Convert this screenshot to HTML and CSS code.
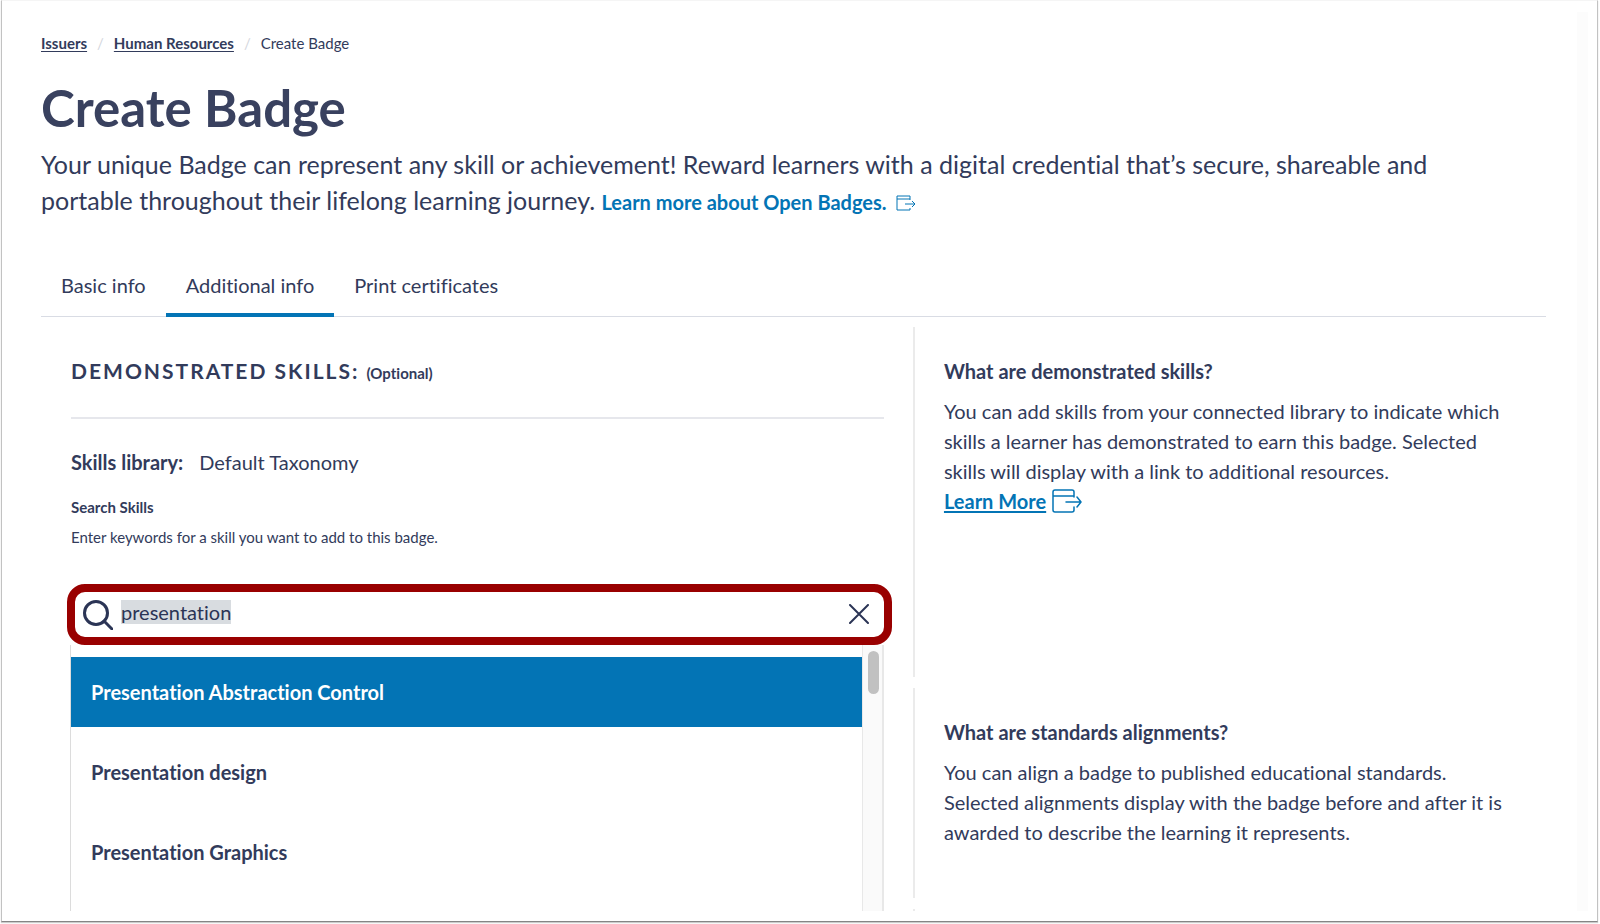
FILE: index.html
```html
<!DOCTYPE html>
<html lang="en">
<head>
<meta charset="utf-8">
<title>Create Badge</title>
<link rel="stylesheet" href="styles.css">
</head>
<body>
<svg class="sprite" aria-hidden="true">
  <symbol id="external" viewBox="0 0 30 24">
    <path d="M22 8V3a2 2 0 0 0-2-2H3a2 2 0 0 0-2 2v18a2 2 0 0 0 2 2h17a2 2 0 0 0 2-2v-3M1 7h21M14 13h15M25 8l4 5-4 5" fill="none" stroke="currentColor" stroke-width="1.5" stroke-linecap="round" stroke-linejoin="round"/>
  </symbol>
</svg>
<div class="frame">
  <div class="page">
    <header>
      <nav class="crumbs" aria-label="Breadcrumb">
        <a href="#">Issuers</a>
        <span class="sep">/</span>
        <a href="#">Human Resources</a>
        <span class="sep">/</span>
        <span>Create Badge</span>
      </nav>
      <h1 class="title">Create Badge</h1>
      <p class="lead">Your unique Badge can represent any skill or achievement! Reward learners with a digital credential that’s secure, shareable and portable throughout their lifelong learning journey. <a class="lead-link" href="#">Learn more about Open Badges. <svg class="icon-small" viewBox="0 0 20 16" aria-hidden="true"><path d="M14 5V1H1v14h13v-2M1 4h13M9 9h10M16 6l3 3-3 3" fill="none" stroke="currentColor" stroke-width="1"/></svg></a></p>
    </header>
    <nav class="tabs" aria-label="Badge sections">
      <a class="tab" href="#">Basic info</a>
      <a class="tab tab-active" href="#" aria-current="page">Additional info</a>
      <a class="tab" href="#">Print certificates</a>
    </nav>
    <div class="sections">
      <section class="skills">
        <h2 class="skills-title">DEMONSTRATED SKILLS: <small>(Optional)</small></h2>
        <p class="library"><strong>Skills library:</strong><span>Default Taxonomy</span></p>
        <label class="search-label" for="skill-search">Search Skills</label>
        <p class="search-help" id="skill-help">Enter keywords for a skill you want to add to this badge.</p>
        <div class="search">
          <svg class="search-icon" viewBox="0 0 30 30" aria-hidden="true"><circle cx="13" cy="13" r="11.5"/><path d="M21 21l8 8"/></svg>
          <input class="search-input" id="skill-search" type="text" value="presentation" aria-describedby="skill-help" autocomplete="off" spellcheck="false">
          <button class="clear" type="button" aria-label="Clear search"><svg viewBox="0 0 20 20" aria-hidden="true"><path d="M1 1l18 18M19 1L1 19"/></svg></button>
          <div class="menu">
            <ul class="options">
              <li><button class="option option-active" type="button">Presentation Abstraction Control</button></li>
              <li><button class="option" type="button">Presentation design</button></li>
              <li><button class="option" type="button">Presentation Graphics</button></li>
            </ul>
            <div class="track"><div class="thumb"></div></div>
          </div>
        </div>
      </section>
      <aside class="help">
        <h3>What are demonstrated skills?</h3>
        <p>You can add skills from your connected library to indicate which skills a learner has demonstrated to earn this badge. Selected skills will display with a link to additional resources.</p>
        <a class="more" href="#"><span>Learn More</span><svg class="icon-large" aria-hidden="true"><use href="#external"/></svg></a>
      </aside>
      <aside class="help">
        <h3>What are standards alignments?</h3>
        <p>You can align a badge to published educational standards. Selected alignments display with the badge before and after it is awarded to describe the learning it represents.</p>
      </aside>
      <aside class="help help-next"></aside>
    </div>
  </div>
  <div class="gutter"></div>
</div>
<script src="script.js"></script>
</body>
</html>
```
FILE: styles.css
```css
* { box-sizing: border-box; }

body {
  margin: 0;
  background: #fff;
  color: #323b5b;
  font: 400 20px/30px Lato, sans-serif;
  font-variant-ligatures: none;
}

h1, h2, h3, p, ul { margin: 0; padding: 0; }
a { color: inherit; }
button, input { font: inherit; color: inherit; }
.sprite { display: none; }

.frame {
  display: flex;
  height: calc(100vh - 2px);
  margin: 0 2px 2px 1px;
  padding: 11px 9px 10px;
  border: 1px solid #c2c2c2;
  border-top-color: #f5f5f5;
  border-bottom-color: #858585;
  box-shadow: 0 1px 1px #ccc;
  overflow: hidden;
}

.page {
  flex: 1;
  display: flex;
  flex-direction: column;
  padding: 0 31px 0 30px;
  overflow: hidden;
}

.gutter {
  width: 11px;
  background: #fcfcfc;
}

.crumbs {
  display: flex;
  gap: 10px;
  padding-top: 20px;
  font-size: 15px;
  line-height: 22px;
}
.crumbs a { font-weight: 700; text-underline-offset: 2px; }
.sep { color: #d5d7de; }

.title {
  padding-top: 22px;
  font-size: 51px;
  font-weight: 700;
  line-height: 64px;
  color: #39415f;
}

.lead {
  padding: 6px 90px 0 0;
  font-size: 25px;
  line-height: 36px;
}
.lead-link {
  display: inline-block;
  color: #0374b5;
  font-size: 20px;
  font-weight: 700;
  line-height: 30px;
  text-decoration: none;
}
.icon-small { width: 20px; height: 16px; margin-left: 5px; vertical-align: -1px; }

.tabs {
  display: flex;
  margin-top: 40px;
  border-bottom: 1px solid #d9dce4;
}
.tab {
  margin-bottom: -1px;
  padding: 12px 20px 13px;
  border-bottom: 4px solid transparent;
  text-decoration: none;
}
.tab-active { border-color: #0374b5; }

.sections {
  flex: 1;
  display: grid;
  grid-template-columns: 73fr 53fr;
  grid-template-rows: 350px 210px 1fr;
  row-gap: 11px;
  margin-top: 10px;
  min-height: 0;
}

.skills {
  grid-row: 1 / -1;
  padding: 29px 29px 0 30px;
}
.skills-title {
  padding-bottom: 29px;
  border-bottom: 2px solid #e6e7ec;
  font-size: 21px;
  font-weight: 700;
  letter-spacing: 2px;
}
.skills-title small {
  font-size: 15px;
  letter-spacing: normal;
}
.library {
  display: flex;
  gap: 16px;
  padding-top: 28px;
}
.library strong { font-weight: 700; }
.search-label {
  display: block;
  padding-top: 15px;
  font-size: 15px;
  font-weight: 700;
}
.search-help { font-size: 15px; }

.search {
  position: relative;
  display: flex;
  align-items: center;
  gap: 8px;
  margin: 32px -8px 0 -4px;
  padding: 0 15px 0 8px;
  border: 8px solid #990000;
  border-radius: 18px;
}
.search-icon { width: 30px; height: 30px; flex: none; }
.search-icon, .clear svg {
  fill: none;
  stroke: #2b3455;
  stroke-width: 3;
  stroke-linecap: round;
}
.search-input {
  flex: 1;
  min-width: 0;
  height: 45px;
  padding: 0 0 5px;
  border: 0;
  outline: 0;
  background: none;
}
.search-input::selection { background: #d8dce0; color: #2b3455; }
.clear {
  display: flex;
  padding: 0 0 2px;
  border: 0;
  background: none;
}
.clear svg { width: 20px; height: 20px; stroke-width: 2; }

.menu {
  position: absolute;
  top: 100%;
  left: -5px;
  right: 0;
  display: flex;
  height: 290px;
  margin-top: 8px;
  border-left: 1px solid #dcdcdc;
}
.options {
  flex: 1;
  padding-top: 12px;
  list-style: none;
}
.option {
  display: block;
  width: 100%;
  margin-bottom: 10px;
  padding: 20px;
  border: 0;
  background: #fff;
  line-height: 30px;
  font-weight: 700;
  text-align: left;
}
.option-active { background: #0374b5; color: #fff; }
.track {
  width: 22px;
  padding: 6px 5px;
  border: solid #e8e8e8;
  border-width: 0 2px 0 1px;
  background: #fafafa;
}
.thumb {
  width: 11px;
  height: 43px;
  border-radius: 6px;
  background: #c1c1c1;
}

.help {
  grid-column: 2;
  padding: 29px 30px 0 29px;
  border-left: 2px solid #ebebeb;
}
.help-next { padding: 0; }
.help h3 {
  margin-bottom: 10px;
  font-size: 20px;
  font-weight: 700;
}
.more {
  display: inline-flex;
  align-items: center;
  gap: 6px;
  color: #0374b5;
  font-weight: 700;
  text-decoration: none;
}
.more span { text-decoration: underline; text-underline-offset: 2px; }
.icon-large { width: 30px; height: 24px; }
```
FILE: script.js
```js
const field = document.getElementById("skill-search");
field.focus();
field.select();
```
